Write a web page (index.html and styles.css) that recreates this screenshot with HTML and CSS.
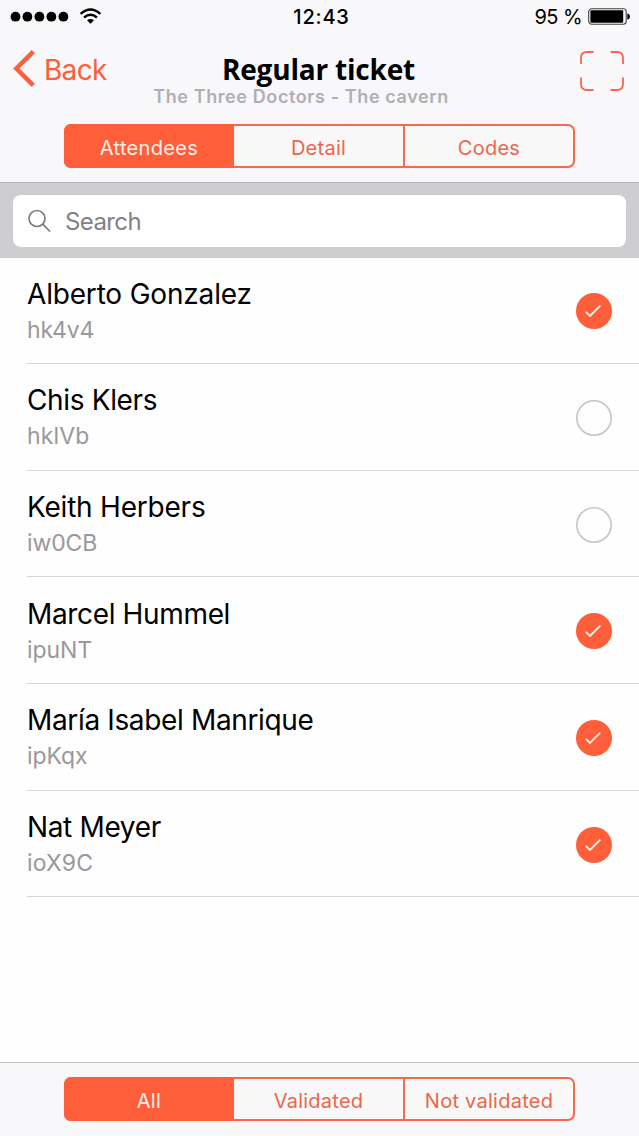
FILE: index.html
```html
<!DOCTYPE html>
<html lang="en">
<head>
<meta charset="utf-8">
<title>Regular ticket</title>
<link rel="stylesheet" href="styles.css">
</head>
<body>
<svg class="defs" width="0" height="0">
  <symbol id="check" viewBox="0 0 36 36"><circle cx="18" cy="18" r="18" fill="#ff5e3a"/><path d="M9.8 18.9L14 22.9L24.3 12.6" fill="none" stroke="#fff2e8" stroke-width="1.8"/></symbol>
  <symbol id="empty" viewBox="0 0 36 36"><circle cx="18" cy="18" r="17.2" fill="none" stroke="#c5c4c9" stroke-width="1.6"/></symbol>
</svg>
<div class="screen">
  <header class="header">
    <div class="status">
      <div class="signal">
        <svg width="95" height="28" viewBox="0 0 95 28"><g><circle cx="15.5" cy="16.7" r="4.9"/><circle cx="27.4" cy="16.7" r="4.9"/><circle cx="39.4" cy="16.7" r="4.9"/><circle cx="51.4" cy="16.7" r="4.9"/><circle cx="63.4" cy="16.7" r="4.9"/></g></svg>
        <svg class="wifi" width="24" height="28" viewBox="0 0 24 28"><g fill="none" stroke="#000" stroke-width="2.4"><path d="M2.6 13.900Q12.5 5.200 22.4 13.900"/><path d="M6 17.500Q12.5 11.900 19 17.500"/></g><path d="M9 20.300Q12.500 17.500 16 20.300L12.500 23.800Z"/></svg>
      </div>
      <div class="time">12:43</div>
      <div class="power"><span class="percent">95 %</span>
        <svg width="43" height="18" viewBox="0 0 43 18"><rect x=".7" y=".7" width="37.5" height="15.6" rx="3" fill="none" stroke="#444" stroke-width="1.1"/><rect x="2.4" y="2.300" width="32.8" height="12.4" rx="1"/><path d="M39.300 5.400Q42 6 42 8.500T39.300 11.600Z"/></svg>
      </div>
    </div>
    <div class="nav">
      <div class="back"><svg width="23" height="37" viewBox="0 0 23 37"><path d="M20.300 1.700L3.400 18.500L20.300 35.300" fill="none" stroke="#ff5e3a" stroke-width="4.500"/></svg><span class="back-text">Back</span></div>
      <div class="titles"><h1 class="title">Regular ticket</h1><div class="subtitle">The Three Doctors - The cavern</div></div>
      <svg class="scan" width="44" height="40" viewBox="0 0 44 40"><path d="M1 13V7Q1 1 7 1H13.500M30.500 1H37Q43 1 43 7V13M43 26.500V33Q43 39 37 39H30.500M13.500 39H7Q1 39 1 33V26.500" fill="none" stroke="#f4684f" stroke-width="1.800"/></svg>
    </div>
    <div class="segments"><div class="segment active"><span>Attendees</span></div><div class="segment"><span>Detail</span></div><div class="segment"><span>Codes</span></div></div>
  </header>
  <div class="searchbar"><div class="search"><svg width="24" height="24" viewBox="0 0 24 24"><g fill="none" stroke="#7c7b80" stroke-width="1.700"><circle cx="9" cy="9.500" r="8"/><path d="M14.700 15.200L22 22.500"/></g></svg><span class="search-text">Search</span></div></div>
  <main class="list">
    <div class="row"><div class="person"><div class="name n1">Alberto Gonzalez</div><div class="code">hk4v4</div></div><svg class="mark"><use href="#check"/></svg></div>
    <div class="row"><div class="person"><div class="name">Chis Klers</div><div class="code c2">hklVb</div></div><svg class="mark"><use href="#empty"/></svg></div>
    <div class="row"><div class="person"><div class="name n3">Keith Herbers</div><div class="code">iw0CB</div></div><svg class="mark"><use href="#empty"/></svg></div>
    <div class="row"><div class="person"><div class="name">Marcel Hummel</div><div class="code">ipuNT</div></div><svg class="mark"><use href="#check"/></svg></div>
    <div class="row"><div class="person"><div class="name">María Isabel Manrique</div><div class="code">ipKqx</div></div><svg class="mark"><use href="#check"/></svg></div>
    <div class="row"><div class="person"><div class="name">Nat Meyer</div><div class="code c2">ioX9C</div></div><svg class="mark"><use href="#check"/></svg></div>
  </main>
  <footer class="footer"><div class="segments"><div class="segment active"><span>All</span></div><div class="segment"><span>Validated</span></div><div class="segment"><span>Not validated</span></div></div></footer>
</div>
</body>
</html>
```
FILE: styles.css
```css
* { box-sizing: border-box; }
body { margin: 0; font-family: Inter, "Liberation Sans", sans-serif; background: #fefefe; }
svg { display: block; flex: none; }
.defs { position: absolute; }
.screen { width: 639px; height: 1136px; display: flex; flex-direction: column; overflow: hidden; white-space: nowrap; }
.header { height: 183px; flex: none; background: #f8f7f9; border-bottom: 1px solid #b6b5b8; }
.status { height: 45px; display: grid; grid-template-columns: 1fr 90px 1fr; align-items: start; }
.signal { display: flex; }
.wifi { margin-left: -17px; }
.time { padding-top: 5px; font-size: 20px; line-height: 24px; font-weight: 500; text-align: center; letter-spacing: .8px; padding-left: 4px; }
.power { display: flex; justify-content: flex-end; padding: 8px 8px 0 0; gap: 6px; }
.percent { font-size: 20px; line-height: 24px; margin-top: -3px; letter-spacing: -.6px; }
.nav { height: 79px; display: grid; grid-template-columns: 140px 1fr 140px; padding: 5px 15px 0 13px; }
.back { display: flex; color: #ff5e3a; gap: 8px; height: 37px; }
.back-text { font-size: 28px; line-height: 41px; letter-spacing: -.7px; }
.titles { text-align: center; margin: 0 -10px; }
.title { margin: 0; font: 700 28px/38px "Open Sans", sans-serif; letter-spacing: -.2px; color: #000; }
.subtitle { color: #b0afb2; font-size: 18px; line-height: 22px; margin-top: -2px; margin-left: -35px; font-weight: 600; letter-spacing: .6px; }
.scan { justify-self: end; margin-top: 1px; }
.segments { display: grid; grid-template-columns: 168px 169px 1fr; width: 511px; height: 44px; margin-left: 64px; border: 2px solid #f7694c; border-radius: 7px; background: linear-gradient(90deg, #ff5e3a 168px, #f9f8f8 168px); }
.segment { display: flex; align-items: center; justify-content: center; color: #e9674c; font-size: 20px; letter-spacing: .25px; padding-top: 3px; }
.segment:last-child { border-left: 2px solid #ee6d54; }
.segment.active { background: #ff5e3a; color: #fff0e9; margin: -2px 0 -2px -2px; border-radius: 7px 0 0 7px; letter-spacing: .35px; }
.searchbar { height: 74.5px; flex: none; background: #cecdd0; padding: 12px 13px 10.5px; }
.search { height: 52px; background: #fff; border-radius: 8px; display: flex; align-items: center; padding: 0 15px; gap: 13px; color: #828186; }
.search-text { font-size: 24px; letter-spacing: -.6px; }
.list { flex: 1; }
.row { height: 106.65px; margin-left: 27px; border-bottom: 1px solid #d5d4d7; display: flex; align-items: center; justify-content: space-between; padding-right: 27px; }
.person { padding-top: 1px; }
.name { font-size: 28px; line-height: 36px; color: #000; letter-spacing: -.35px; margin-top: 1px; }
.n1 { letter-spacing: -.18px; }
.n3 { letter-spacing: -.22px; }
.code { font-size: 23px; line-height: 34px; color: #99989c; letter-spacing: -.1px; margin-top: 1px; }
.c2 { letter-spacing: .15px; }
.mark { width: 36px; height: 36px; margin-top: 2px; }
.footer { height: 74px; flex: none; border-top: 1px solid #c3c2c6; padding-top: 14px; background: #f8f7f9; }
```
